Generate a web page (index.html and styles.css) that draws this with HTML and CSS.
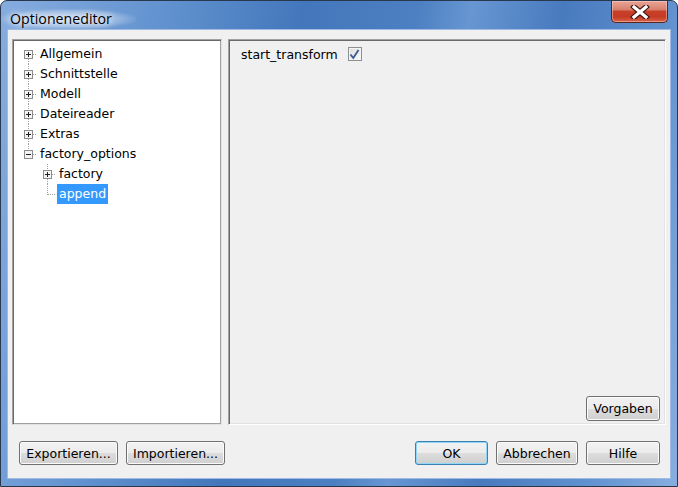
FILE: index.html
```html
<!DOCTYPE html>
<html lang="de">
<head>
<meta charset="utf-8">
<title>Optioneneditor</title>
<link rel="stylesheet" href="styles.css">
</head>
<body>
<div class="window">
  <div class="titlebar">
    <span class="title">Optioneneditor</span>
    <div class="close">
      <svg width="20" height="14" viewBox="0 0 20 14">
        <path d="M4 2 L16 12 M16 2 L4 12" stroke="#3b1410" stroke-width="5.5" stroke-linecap="square" fill="none"/>
        <path d="M4 2 L16 12 M16 2 L4 12" stroke="#ffffff" stroke-width="3.2" stroke-linecap="square" fill="none"/>
      </svg>
    </div>
  </div>
  <div class="client">
    <div class="panels">
      <div class="tree">
        <div class="row l0">
          <svg class="handle" width="18" height="20" viewBox="0 0 18 20">
            <line class="dot" x1="9.5" y1="15" x2="9.5" y2="20"/>
            <line class="dot" x1="14" y1="10.5" x2="18" y2="10.5"/>
            <rect class="box" x="5.5" y="6.5" width="8" height="8"/>
            <path class="sign" d="M7 10.5 H12 M9.5 8 V13"/>
          </svg>
          <span class="label">Allgemein</span>
        </div>
        <div class="row l0">
          <svg class="handle" width="18" height="20" viewBox="0 0 18 20">
            <line class="dot" x1="9.5" y1="0" x2="9.5" y2="6"/>
            <line class="dot" x1="9.5" y1="15" x2="9.5" y2="20"/>
            <line class="dot" x1="14" y1="10.5" x2="18" y2="10.5"/>
            <rect class="box" x="5.5" y="6.5" width="8" height="8"/>
            <path class="sign" d="M7 10.5 H12 M9.5 8 V13"/>
          </svg>
          <span class="label">Schnittstelle</span>
        </div>
        <div class="row l0">
          <svg class="handle" width="18" height="20" viewBox="0 0 18 20">
            <line class="dot" x1="9.5" y1="0" x2="9.5" y2="6"/>
            <line class="dot" x1="9.5" y1="15" x2="9.5" y2="20"/>
            <line class="dot" x1="14" y1="10.5" x2="18" y2="10.5"/>
            <rect class="box" x="5.5" y="6.5" width="8" height="8"/>
            <path class="sign" d="M7 10.5 H12 M9.5 8 V13"/>
          </svg>
          <span class="label">Modell</span>
        </div>
        <div class="row l0">
          <svg class="handle" width="18" height="20" viewBox="0 0 18 20">
            <line class="dot" x1="9.5" y1="0" x2="9.5" y2="6"/>
            <line class="dot" x1="9.5" y1="15" x2="9.5" y2="20"/>
            <line class="dot" x1="14" y1="10.5" x2="18" y2="10.5"/>
            <rect class="box" x="5.5" y="6.5" width="8" height="8"/>
            <path class="sign" d="M7 10.5 H12 M9.5 8 V13"/>
          </svg>
          <span class="label">Dateireader</span>
        </div>
        <div class="row l0">
          <svg class="handle" width="18" height="20" viewBox="0 0 18 20">
            <line class="dot" x1="9.5" y1="0" x2="9.5" y2="6"/>
            <line class="dot" x1="9.5" y1="15" x2="9.5" y2="20"/>
            <line class="dot" x1="14" y1="10.5" x2="18" y2="10.5"/>
            <rect class="box" x="5.5" y="6.5" width="8" height="8"/>
            <path class="sign" d="M7 10.5 H12 M9.5 8 V13"/>
          </svg>
          <span class="label">Extras</span>
        </div>
        <div class="row l0">
          <svg class="handle" width="18" height="20" viewBox="0 0 18 20">
            <line class="dot" x1="9.5" y1="0" x2="9.5" y2="6"/>
            <line class="dot" x1="14" y1="10.5" x2="18" y2="10.5"/>
            <rect class="box" x="5.5" y="6.5" width="8" height="8"/>
            <path class="sign" d="M7 10.5 H12"/>
          </svg>
          <span class="label">factory_options</span>
        </div>
        <div class="row l1">
          <svg class="handle" width="18" height="20" viewBox="0 0 18 20">
            <line class="dot" x1="9.5" y1="0" x2="9.5" y2="6"/>
            <line class="dot" x1="9.5" y1="15" x2="9.5" y2="20"/>
            <line class="dot" x1="14" y1="10.5" x2="18" y2="10.5"/>
            <rect class="box" x="5.5" y="6.5" width="8" height="8"/>
            <path class="sign" d="M7 10.5 H12 M9.5 8 V13"/>
          </svg>
          <span class="label">factory</span>
        </div>
        <div class="row l1">
          <svg class="handle" width="18" height="20" viewBox="0 0 18 20">
            <line class="dot" x1="9.5" y1="0" x2="9.5" y2="11"/>
            <line class="dot" x1="10" y1="10.5" x2="18" y2="10.5"/>
          </svg>
          <span class="label selected">append</span>
        </div>
      </div>
      <div class="editor">
        <div class="prop">
          <span class="prop-name">start_transform</span>
          <span class="check">
            <svg width="11" height="11" viewBox="0 0 11 11">
              <path d="M1.5 5.5 L4.3 9 L9.5 1" stroke="#3e5a96" stroke-width="1.9" fill="none"/>
            </svg>
          </span>
        </div>
        <button class="btn vorgaben">Vorgaben</button>
      </div>
    </div>
    <div class="buttons">
      <button class="btn w99">Exportieren...</button>
      <button class="btn w99">Importieren...</button>
      <span class="spacer"></span>
      <button class="btn ok">OK</button>
      <button class="btn w82">Abbrechen</button>
      <button class="btn w74">Hilfe</button>
    </div>
  </div>
</div>
</body>
</html>
```
FILE: styles.css
```css
html, body {
  margin: 0;
  padding: 0;
  background: #ffffff;
}

.window {
  width: 678px;
  height: 487px;
  box-sizing: border-box;
  border: 1px solid #27384f;
  border-radius: 7px 7px 0 0;
  background:
    linear-gradient(100deg, #86acdf 0%, #6192cf 22%, #4377bb 40%, #4d80c2 55%, #6796d2 62%, #487abe 74%, #6091cf 88%, #88aee0 100%);
  display: flex;
  flex-direction: column;
  font-family: "DejaVu Sans", sans-serif;
  font-size: 12.5px;
  color: #000;
}

.titlebar {
  height: 29px;
  display: flex;
  align-items: flex-start;
  flex: none;
}

.title {
  font-family: "Open Sans", sans-serif;
  font-size: 14.2px;
  line-height: 20px;
  margin-top: 8px;
  padding: 0 24px 0 9px;
  color: #000;
  text-shadow: 0 0 6px #ffffff, 0 0 10px rgba(255, 255, 255, 0.9);
  background: radial-gradient(ellipse at center, rgba(255, 255, 255, 0.6) 0%, rgba(255, 255, 255, 0.25) 55%, rgba(255, 255, 255, 0) 75%);
}

.close {
  margin-left: auto;
  margin-right: 9px;
  width: 57px;
  height: 22px;
  box-sizing: border-box;
  border: 1px solid #5a231b;
  border-top: none;
  border-radius: 0 0 5px 5px;
  background: linear-gradient(#e9a596 0%, #d9826f 40%, #c8402a 50%, #c53a24 75%, #d9644a 100%);
  box-shadow: inset 0 0 0 1px rgba(255, 220, 210, 0.45);
  display: flex;
  align-items: center;
  justify-content: center;
}

.close svg {
  display: block;
}

.client {
  flex: 1;
  margin: 0 7px 8px;
  background: #f0f0f0;
  box-shadow: 0 0 0 1px #9fbbe3;
  display: flex;
  flex-direction: column;
  padding-top: 9px;
}

.panels {
  height: 386px;
  display: flex;
  gap: 6px;
  padding: 0 4px;
}

.tree {
  width: 210px;
  box-sizing: border-box;
  background: #ffffff;
  border: 1px solid #a0a0a0;
  border-right-color: #e3e3e3;
  border-bottom-color: #e3e3e3;
  box-shadow: inset 1px 1px 0 #696969, inset -1px -1px 0 #a0a0a0;
  padding: 4px 0 0 6px;
}

.row {
  display: flex;
  align-items: center;
  height: 20px;
}

.row.l1 {
  padding-left: 19px;
}

.handle {
  display: block;
  flex: none;
}

.dot {
  stroke: #a0a0a0;
  stroke-width: 1;
  stroke-dasharray: 1 1;
}

.box {
  fill: #f4f4f4;
  stroke: #8c8c8c;
  stroke-width: 1;
}

.sign {
  stroke: #1f1f1f;
  stroke-width: 1;
  fill: none;
}

.label {
  margin-left: 1px;
  padding: 0 2px;
  line-height: 20px;
  white-space: nowrap;
}

.label.selected {
  background: #3399ff;
  color: #ffffff;
}

.editor {
  flex: 1;
  box-sizing: border-box;
  border: 1px solid #a0a0a0;
  border-right-color: #ffffff;
  border-bottom-color: #ffffff;
  box-shadow: inset 1px 1px 0 #696969, inset -1px -1px 0 #e3e3e3;
  display: flex;
  flex-direction: column;
  padding: 4px 0 0 12px;
}

.prop {
  display: flex;
  align-items: center;
  height: 20px;
  gap: 10px;
}

.check {
  width: 14px;
  height: 14px;
  box-sizing: border-box;
  border: 1px solid #8e8f8f;
  background: linear-gradient(135deg, #dcdcdc, #fbfbfb);
  box-shadow: inset 0 0 0 1px #f4f4f4;
  display: flex;
  align-items: center;
  justify-content: center;
}

.check svg {
  display: block;
}

.btn {
  font-family: "DejaVu Sans", sans-serif;
  font-size: 12.5px;
  color: #000;
  height: 24px;
  padding: 0;
  box-sizing: border-box;
  border: 1px solid #707070;
  border-radius: 3px;
  background: linear-gradient(#f2f2f2 0%, #ebebeb 50%, #dddddd 50%, #cfcfcf 100%);
  box-shadow: inset 0 0 0 1px #fbfbfb;
}

.vorgaben {
  width: 74px;
  height: 25px;
  margin-top: auto;
  align-self: flex-end;
  margin-right: 5px;
  margin-bottom: 3px;
}

.buttons {
  display: flex;
  gap: 8px;
  margin-top: 16px;
  padding: 0 10px 0 11px;
}

.spacer {
  flex: 1;
}

.w99 {
  width: 99px;
}

.w82 {
  width: 82px;
}

.w74 {
  width: 74px;
}

.ok {
  width: 73px;
  border-color: #3c7fb1;
  box-shadow: inset 0 0 0 1px #8fd6f7;
}
```
